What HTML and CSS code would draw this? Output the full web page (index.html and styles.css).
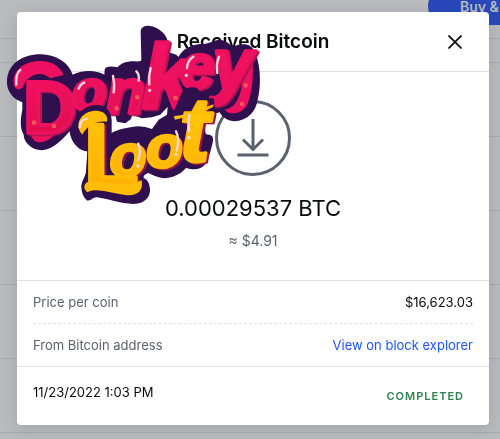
FILE: index.html
```
<!DOCTYPE html>
<html lang="en">
<head>
    <meta charset="UTF-8">
    <meta name="viewport" content="width=device-width, initial-scale=1.0">
    <title>Received Bitcoin</title>
    <link rel="stylesheet" href="styles.css">
</head>
<body>

<div class="page">
    <header class="topbar">
        <button class="buy-button" type="button">Buy &amp; Sell</button>
    </header>
    <div class="toolbar"></div>
    <div class="row"></div>
    <div class="row"></div>
    <div class="row"></div>
    <div class="row"></div>
    <div class="row"></div>
</div>

<div class="overlay">
    <div class="modal" role="dialog" aria-labelledby="modalTitle">
        <div class="modal-header">
            <h1 id="modalTitle">Received Bitcoin</h1>
            <button class="close-button" type="button" aria-label="Close">
                <svg width="14" height="14" viewBox="0 0 14 14"><path d="M.5 .5L13.500 13.500M13.500 .5L.5 13.500"/></svg>
            </button>
        </div>

        <div class="summary">
            <svg class="receive-icon" width="76" height="76" viewBox="0 0 76 76">
                <circle cx="38" cy="38" r="36.5"/>
                <path d="M38 19V49M28 39.500L38 49.500L48 39.500M22.500 55H53.500"/>
            </svg>
            <p class="amount">0.00029537 BTC</p>
            <p class="fiat">≈ $4.91</p>
        </div>

        <dl class="details">
            <div class="detail">
                <dt>Price per coin</dt>
                <dd>$16,623.03</dd>
            </div>
            <div class="detail">
                <dt>From Bitcoin address</dt>
                <dd><a href="#">View on block explorer</a></dd>
            </div>
        </dl>

        <div class="modal-footer">
            <time datetime="2022-11-23T13:03">11/23/2022 1:03 PM</time>
            <span class="status">Completed</span>
        </div>
    </div>
</div>

<svg class="logo" viewBox="20 76 762 540">
    <defs>
        <linearGradient id="pink" x1="0" y1="0" x2="0" y2="1">
            <stop offset="0" stop-color="#f9146a"/>
            <stop offset="1" stop-color="#df0d4b"/>
        </linearGradient>
        <linearGradient id="gold" x1="0" y1="0" x2="0" y2="1">
            <stop offset="0" stop-color="#ffd00b"/>
            <stop offset="1" stop-color="#ffa905"/>
        </linearGradient>
    </defs>
    <!-- backing sticker -->
    <path class="backing" d="M20 245C22 190 70 163 122 164C170 165 205 190 217 225C240 212 285 208 312 225L313 210C316 198 335 200 352 203C362 190 380 184 405 185Q425 186 423 180L421 95Q421 78 445 78C480 82 502 108 503 130L502 158C515 160 530 165 535 172C545 150 570 135 600 133C625 134 640 120 660 120C685 124 690 140 700 140C725 130 755 130 765 160C782 200 782 260 772 300C766 335 745 362 700 365C680 363 665 352 658 338C645 342 635 345 622 350C615 375 612 400 618 404C635 405 640 412 638 425C632 450 625 480 612 497C600 510 580 512 557 505C540 525 515 535 490 536C470 533 455 525 445 520C430 525 430 530 430 535C445 540 450 560 449 575C446 598 430 612 400 613C360 612 320 597 290 593C278 592 275 602 262 603C248 595 243 575 243 558C246 540 256 530 257 515L261 455C235 455 210 425 208 395C190 415 160 450 125 452C90 450 70 425 70 405C58 385 60 360 66 330V308C40 300 18 275 20 245Z"/>
    <path class="gap" d="M327 345L346 350L350 366L375 371L392 358L395 345L425 356L455 353L480 345L502 322L500 345L475 360L455 388Q425 376 395 382Q350 388 328 403ZM646 288Q656 284 662 290L686 293L678 307Z"/>
    <path class="curl" d="M40 250C36 208 78 182 124 184C158 186 180 202 190 226L150 236C124 212 84 220 66 264C50 276 42 264 40 250ZM92 396C130 404 160 380 176 350L200 330C190 378 160 424 120 428C100 428 90 412 92 396Z"/>
    <path class="curl" d="M732 150Q752 144 756 170C760 230 756 280 742 312C728 342 690 350 672 330C700 328 718 300 724 260Z"/>
    <text class="donkey"><tspan class="capital" x="68" y="400">D</tspan><tspan class="small" x="214" y="332">o</tspan><tspan class="medium" x="318" y="340">n</tspan><tspan class="tall" x="424" y="324">k</tspan><tspan class="medium" x="538" y="266">e</tspan><tspan class="tail" x="636" y="272">y</tspan></text>
    <!-- keeps the lower word clear of the upper one -->
    <path class="backing" d="M214 405C208 350 255 314 290 316C325 318 336 345 334 370V520H262V440C240 440 218 425 214 405ZM544 280Q556 258 590 264L612 296L640 296L645 335L612 350V440H545V375L510 360Z"/>
    <text class="loot"><tspan class="lead" x="250" y="562">L</tspan><tspan class="round" x="328" y="530">o</tspan><tspan class="round" x="438" y="503">o</tspan><tspan class="last" x="538" y="484">t</tspan></text>
    <!-- hook and foot of the gold word -->
    <path class="swash" d="M242 400C220 365 250 333 288 333C310 334 324 346 320 366C286 362 260 378 246 405ZM260 548C320 538 360 568 424 542C430 575 410 590 375 586C325 580 286 563 262 578C248 570 250 554 260 548ZM520 350Q570 344 606 326L640 314L638 322Q600 344 524 360Z"/>
    <path class="shine" d="M48 255Q46 220 60 211M235 267Q241 252 252 249M338 229Q344 255 340 278M408 215Q418 225 415 243M451 205Q444 230 447 254M560 205Q562 180 579 171M656 171Q647 190 651 220M238 383Q240 360 259 357M414 432Q424 455 413 482M527 395Q539 420 529 452M567 345Q562 370 566 395"/>
    <path class="dots" d="M448 272h.1M558 227h.1M413 499h.1M527 464h.1M566 414h.1"/>
    <path class="freckles" d="M101 369h.1M161 379h.1M349 326h.1M411 293h.1M525 295h.1M725 313h.1M736 257h.1"/>
</svg>

</body>
</html>
```
FILE: styles.css
```
* {
    box-sizing: border-box;
}
body {
    font-family: Inter, "Liberation Sans", sans-serif;
    font-size: 13px;
    line-height: 20px;
    background-color: #babbbd;
    color: #0a0b0d;
    margin: 0;
}
h1, p, dl, dd {
    margin: 0;
}
button {
    border: 0;
    font-family: inherit;
    cursor: pointer;
}

/* dimmed page behind the dialog */
.page {
    height: 100vh;
    overflow: hidden;
}
.topbar {
    display: flex;
    justify-content: flex-end;
    height: 39px;
    border-bottom: 1px solid #a9aaad;
    overflow: hidden;
}
.buy-button {
    flex-shrink: 0;
    height: 38px;
    margin-top: -13px;
    margin-right: -59px;
    padding: 0 32px;
    border-radius: 19px;
    background-color: #2848bb;
    color: #babbbd;
    font-size: 14px;
    font-weight: 600;
}
.toolbar {
    height: 24px;
    border-bottom: 1px solid #a9aaad;
}
.row {
    height: 74px;
    border-bottom: 1px solid #a9aaad;
}

/* dialog */
.overlay {
    position: fixed;
    inset: 0;
    padding: 12px 11px 14px 17px;
}
.modal {
    background-color: #fff;
    border-radius: 4px;
    box-shadow: 0 4px 16px rgba(70, 70, 90, 0.2);
}
.modal-header {
    display: grid;
    grid-template-columns: 40px 1fr 40px;
    align-items: center;
    height: 60px;
    padding: 0 14px;
    border-bottom: 1px solid #dfe0e3;
}
.modal-header h1 {
    grid-column: 2;
    font-size: 19px;
    font-weight: 600;
    text-align: center;
}
.close-button {
    display: flex;
    justify-content: center;
    padding: 8px;
    background: none;
}
.close-button path {
    stroke: #0a0b0d;
    stroke-width: 1.7;
}
.summary {
    display: flex;
    flex-direction: column;
    align-items: center;
    padding: 28px 16px 29px;
    border-bottom: 1px solid #dfe0e3;
}
.receive-icon {
    fill: none;
    stroke: #5b616e;
    stroke-width: 3;
}
.amount {
    margin-top: 16px;
    font-size: 22px;
    line-height: 32px;
}
.fiat {
    margin-top: 7px;
    color: #5b616e;
    font-size: 14px;
}
.details {
    padding: 0 16px;
    border-bottom: 1px solid #dfe0e3;
}
.detail {
    display: flex;
    justify-content: space-between;
    align-items: center;
    height: 42px;
}
.detail + .detail {
    height: 43px;
    border-top: 1px dashed #dfe0e3;
}
dt {
    color: #5b616e;
}
a {
    color: #1f55fa;
    text-decoration: none;
}
a:hover {
    text-decoration: underline;
}
.modal-footer {
    display: flex;
    justify-content: space-between;
    padding: 15px 16px 19px;
}
.status {
    padding: 4px 9px 0 0;
    color: #30804f;
    font-size: 11px;
    font-weight: 600;
    letter-spacing: 1px;
    text-transform: uppercase;
}

/* logo sticker */
.logo {
    position: absolute;
    top: 25px;
    left: 7px;
    width: 254px;
    height: 180px;
}
.backing {
    fill: #2f0f4d;
}
.gap {
    fill: #fff;
}
.donkey, .loot {
    font-family: "Liberation Sans", sans-serif;
    font-weight: 700;
    stroke-width: 10;
    stroke-linejoin: round;
}
.donkey {
    fill: url(#pink);
    stroke: #ee1060;
    filter: drop-shadow(6px 4px 0 #ae1650);
}
.loot {
    fill: url(#gold);
    stroke: #ffbd08;
    filter: drop-shadow(6px 4px 0 #9b1450);
}
.small, .medium, .tall, .tail, .round, .last {
    font-style: italic;
}
.small {
    font-size: 170px;
}
.round {
    font-size: 180px;
}
.medium {
    font-size: 190px;
}
.capital, .tail {
    font-size: 220px;
}
.tall {
    font-size: 270px;
}
.lead, .last {
    font-size: 270px;
}
.curl {
    fill: #ee1060;
}
.swash {
    fill: #ffbd08;
}
.shine, .dots, .freckles {
    fill: none;
    stroke: #ffd9df;
    stroke-width: 7;
    stroke-linecap: round;
}
.dots {
    stroke-width: 10;
}
.freckles {
    stroke: #f2555c;
    stroke-width: 14;
}
```
